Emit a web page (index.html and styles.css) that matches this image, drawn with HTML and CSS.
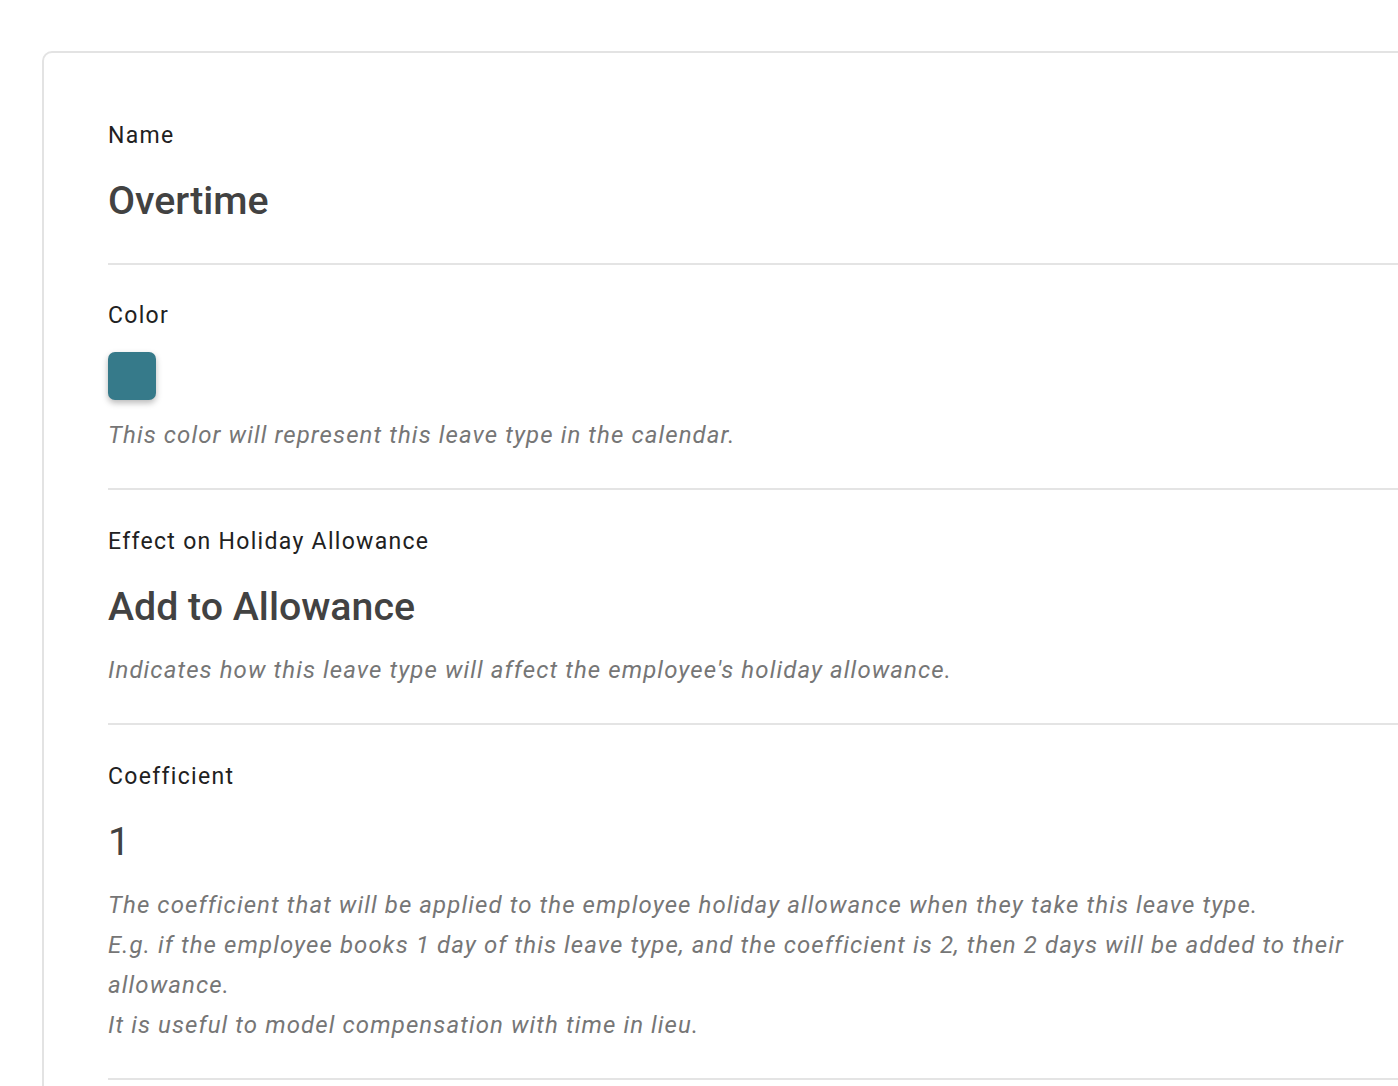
FILE: index.html
```html
<!DOCTYPE html>
<html lang="en">
<head>
<meta charset="utf-8">
<title>Leave type</title>
<link rel="stylesheet" href="styles.css">
</head>
<body>
<div class="page">
  <div class="card">
    <section class="field field-first">
      <div class="label">Name</div>
      <div class="value">Overtime</div>
    </section>
    <section class="field">
      <div class="label">Color</div>
      <div class="swatch"></div>
      <p class="desc desc-after-swatch">This color will represent this leave type in the calendar.</p>
    </section>
    <section class="field">
      <div class="label">Effect on Holiday Allowance</div>
      <div class="value">Add to Allowance</div>
      <p class="desc">Indicates how this leave type will affect the employee's holiday allowance.</p>
    </section>
    <section class="field">
      <div class="label">Coefficient</div>
      <div class="value value-num">1</div>
      <p class="desc">The coefficient that will be applied to the employee holiday allowance when they take this leave type.<br>E.g. if the employee books 1 day of this leave type, and the coefficient is 2, then 2 days will be added to their allowance.<br>It is useful to model compensation with time in lieu.</p>
    </section>
  </div>
</div>
</body>
</html>
```
FILE: styles.css
```css
html, body {
  margin: 0;
  padding: 0;
  background: #ffffff;
}
body {
  font-family: Roboto, "Liberation Sans", Arial, sans-serif;
  overflow: hidden;
}
.page {
  height: 1086px;
  padding: 51px 0 0 42px;
  box-sizing: border-box;
  overflow: hidden;
}
.card {
  width: 1424px;
  box-sizing: border-box;
  border: 2px solid #e3e3e3;
  border-radius: 10px;
  padding: 31px 64px 64px 64px;
  background: #fff;
}
.field {
  padding: 38.5px 0 33px;
  border-bottom: 2px solid #e4e4e4;
}
.field-first {
  padding-bottom: 37.5px;
}
.label {
  font-size: 23px;
  line-height: 26px;
  letter-spacing: 1.3px;
  color: #212121;
}
.value {
  margin-top: 28.5px;
  font-size: 39.3px;
  line-height: 48px;
  font-weight: 500;
  color: #424242;
}
.value-num {
  font-weight: 400;
}
.swatch {
  margin-top: 23px;
  width: 48px;
  height: 48px;
  border-radius: 7px;
  background: #367a8a;
  box-shadow: 0 3px 6px rgba(0, 0, 0, 0.28);
}
.desc {
  margin: 19px 0 0;
  font-size: 24px;
  line-height: 40px;
  font-style: italic;
  letter-spacing: 1.1px;
  color: #767676;
}
.desc-after-swatch {
  margin-top: 15px;
}
```
